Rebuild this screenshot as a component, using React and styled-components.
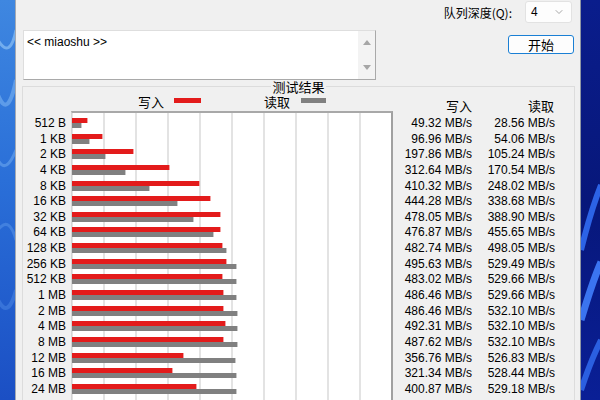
import React from "react";
import styled, { createGlobalStyle } from "styled-components";
import { ChevronDown } from "lucide-react";

const GlobalStyle = createGlobalStyle`
  html, body {
    margin: 0;
    padding: 0;
    overflow: hidden;
  }
  body {
    font-family: "Liberation Sans", "Noto Sans CJK SC", sans-serif;
    font-size: 12px;
    color: #000;
  }
`;

// last row only peeks in at the bottom edge, so it has no texts
const ROWS = [
  ["512 B", 49.32, 28.56],
  ["1 KB", 96.96, 54.06],
  ["2 KB", 197.86, 105.24],
  ["4 KB", 312.64, 170.54],
  ["8 KB", 410.32, 248.02],
  ["16 KB", 444.28, 338.68],
  ["32 KB", 478.05, 388.9],
  ["64 KB", 476.87, 455.65],
  ["128 KB", 482.74, 498.05],
  ["256 KB", 495.63, 529.49],
  ["512 KB", 483.02, 529.66],
  ["1 MB", 486.46, 529.66],
  ["2 MB", 486.46, 532.1],
  ["4 MB", 492.31, 532.1],
  ["8 MB", 487.62, 532.1],
  ["12 MB", 356.76, 526.83],
  ["16 MB", 321.34, 528.44],
  ["24 MB", 400.87, 529.18],
];
const BARS = [...ROWS, ["32 MB", 350.12, 529.4]];

const SCALE = 0.31;
const ROW_H = "15.65px";

const Screen = styled.div`
  width: 600px;
  height: 400px;
  overflow: hidden;
  display: flex;
`;

const Wall = styled.div`
  width: ${(p) => p.$w}px;
  flex: none;
  height: 400px;
  svg {
    display: block;
  }
`;

const Window = styled.div`
  flex: 1;
  background: #f0f0f0;
  border-left: 1px solid #a3a9b3;
  border-right: 1px solid #8e96a4;
  display: flex;
  flex-direction: column;
`;

const TopBar = styled.div`
  flex: none;
  height: 30px;
  display: flex;
  justify-content: flex-end;
  align-items: flex-start;
  padding-right: 8px;
  font-family: "Noto Sans CJK SC", "Liberation Sans", sans-serif;
`;

const QLabel = styled.span`
  font-size: 12px;
  line-height: 16px;
  margin-top: 5px;
  margin-right: 13px;
`;

const Select = styled.div`
  width: 47px;
  height: 22px;
  margin-top: 1px;
  box-sizing: border-box;
  background: #fdfdfd;
  border: 1px solid #e2e2e2;
  border-radius: 3px;
  display: flex;
  align-items: center;
  justify-content: space-between;
  padding: 0 6px 0 5px;
  font-size: 12px;
  font-family: "Liberation Sans", sans-serif;
`;

const InputRow = styled.div`
  flex: none;
  display: flex;
  align-items: flex-start;
`;

const Memo = styled.div`
  width: 353px;
  height: 50px;
  box-sizing: border-box;
  margin-left: 7px;
  background: #fff;
  border: 1px solid;
  border-color: #dedede #a9a9a9 #a9a9a9 #dedede;
  display: flex;
`;

const MemoText = styled.div`
  flex: 1;
  padding: 4px 0 0 3px;
  font-size: 12px;
  line-height: 14px;
`;

const ScrollCol = styled.div`
  width: 17px;
  background: #f3f3f3;
  display: flex;
  flex-direction: column;
  align-items: center;
  justify-content: space-between;
  padding: 9px 0 9px;
  box-sizing: border-box;
`;

const Arrow = styled.div`
  width: 0;
  height: 0;
  border-left: 4px solid transparent;
  border-right: 4px solid transparent;
  ${(p) =>
    p.$down
      ? "border-top: 5px solid #a6a6a6;"
      : "border-bottom: 5px solid #a6a6a6;"}
`;

const StartButton = styled.button`
  margin-left: auto;
  margin-right: 6px;
  margin-top: 5px;
  width: 66px;
  height: 19px;
  padding: 0;
  background: #fdfdfd;
  border: 1px solid #1a7fd4;
  border-radius: 3px;
  font-family: "Noto Sans CJK SC", sans-serif;
  font-size: 13px;
  line-height: 15px;
  color: #000;
`;

const Group = styled.fieldset`
  flex: none;
  margin: -1px 5px 0 6px;
  padding: 0;
  min-width: 0;
  border: 1px solid #dcdcdc;
  legend {
    margin: 0 auto;
    padding: 0 1px;
    font-family: "Noto Sans CJK SC", sans-serif;
    font-size: 13px;
    line-height: 15px;
  }
`;

const LegendRow = styled.div`
  height: 17px;
  display: flex;
  align-items: flex-start;
  font-family: "Noto Sans CJK SC", sans-serif;
  font-size: 13px;
  line-height: 15px;
`;

const KeyText = styled.span`
  margin-left: ${(p) => p.$ml}px;
`;

const Swatch = styled.span`
  width: ${(p) => p.$w}px;
  height: 5px;
  margin-top: 4px;
  margin-left: ${(p) => p.$ml}px;
  background: ${(p) => p.$c};
`;

const HeadGroup = styled.div`
  margin-left: auto;
  margin-top: 4px;
  padding-right: 19px;
  display: flex;
`;

const HeadCell = styled.span`
  width: ${(p) => p.$w}px;
  text-align: right;
  padding-right: ${(p) => p.$pr || 0}px;
  box-sizing: border-box;
`;

const Main = styled.div`
  display: flex;
  align-items: flex-start;
`;

const LabelCol = styled.div`
  width: 48px;
  padding: 5px 5px 0 0;
  box-sizing: border-box;
  text-align: right;
`;

const Cell = styled.div`
  height: ${ROW_H};
  line-height: ${ROW_H};
  white-space: nowrap;
`;

const Chart = styled.div`
  width: 322px;
  height: 300px;
  box-sizing: border-box;
  border-left: 1px solid #d4d4d4;
  border-top: 2px solid #a8a8a8;
  border-right: 2px solid #a0a0a0;
  padding-top: 4px;
  background-color: #fff;
  background-image: linear-gradient(to right, #e3e3e3 2px, transparent 2px);
  background-size: 32px 100%;
  background-position: 31px 0;
`;

const BarRow = styled.div`
  height: ${ROW_H};
  padding-top: 1px;
  box-sizing: border-box;
`;

const Bar = styled.div`
  height: 5px;
  background: ${(p) => p.$c};
  box-shadow: 1px 0 0 ${(p) => p.$edge};
`;

const ValuesCol = styled.div`
  padding: 5px 19px 0 0;
  display: flex;
  flex: 1;
  justify-content: flex-end;
`;

const ValCol = styled.div`
  width: ${(p) => p.$w}px;
  text-align: right;
`;

const fmt = (v) => `${v.toFixed(2)} MB/s`;

const LeftPaper = () => (
  <svg width="15" height="400" viewBox="0 0 15 400">
    <defs>
      <linearGradient id="lw" x1="0" y1="0" x2="0" y2="1">
        <stop offset="0" stopColor="#3f87e0" />
        <stop offset="0.45" stopColor="#2a6fd8" />
        <stop offset="1" stopColor="#1b4fc4" />
      </linearGradient>
    </defs>
    <rect width="15" height="400" fill="url(#lw)" />
    <path d="M-2 40 Q10 60 16 30" stroke="#8cc0f5" strokeWidth="3" fill="none" opacity="0.7" />
    <path d="M-2 95 Q8 120 16 80" stroke="#7ab3f2" strokeWidth="4" fill="none" opacity="0.6" />
    <path d="M-2 160 Q6 175 16 150" stroke="#6aa6ee" strokeWidth="3" fill="none" opacity="0.6" />
    <path d="M-2 230 Q9 215 16 240" stroke="#5b97ea" strokeWidth="3" fill="none" opacity="0.5" />
    <path d="M-2 300 Q8 320 16 290" stroke="#4d8ae6" strokeWidth="4" fill="none" opacity="0.5" />
  </svg>
);

const RightPaper = () => (
  <svg width="19" height="400" viewBox="0 0 19 400">
    <defs>
      <linearGradient id="rw" x1="0" y1="0" x2="0" y2="1">
        <stop offset="0" stopColor="#0a1d8c" />
        <stop offset="0.5" stopColor="#07177a" />
        <stop offset="1" stopColor="#0a1f96" />
      </linearGradient>
    </defs>
    <rect width="19" height="400" fill="url(#rw)" />
    <path d="M0 250 Q10 210 20 185" stroke="#2c63e6" strokeWidth="6" fill="none" />
    <path d="M0 320 Q12 280 20 262" stroke="#3b74f0" strokeWidth="7" fill="none" />
    <path d="M0 390 Q10 360 20 340" stroke="#2b5fe0" strokeWidth="6" fill="none" />
  </svg>
);

export default function App() {
  return (
    <Screen>
      <GlobalStyle />
      <Wall $w={15}>
        <LeftPaper />
      </Wall>
      <Window>
        <TopBar>
          <QLabel>队列深度(Q):</QLabel>
          <Select>
            <span>4</span>
            <ChevronDown size={12} color="#8a8a8a" strokeWidth={1.5} />
          </Select>
        </TopBar>
        <InputRow>
          <Memo>
            <MemoText>{"<< miaoshu >>"}</MemoText>
            <ScrollCol>
              <Arrow />
              <Arrow $down />
            </ScrollCol>
          </Memo>
          <StartButton>开始</StartButton>
        </InputRow>
        <Group>
          <legend>测试结果</legend>
          <LegendRow>
            <KeyText $ml={115}>写入</KeyText>
            <Swatch $w={27} $ml={10} $c="#e31b1b" />
            <KeyText $ml={63}>读取</KeyText>
            <Swatch $w={25} $ml={11} $c="#808080" />
            <HeadGroup>
              <HeadCell $w={79}>写入</HeadCell>
              <HeadCell $w={83} $pr={1}>读取</HeadCell>
            </HeadGroup>
          </LegendRow>
          <Main>
            <LabelCol>
              {ROWS.map(([label]) => (
                <Cell key={label}>{label}</Cell>
              ))}
            </LabelCol>
            <Chart>
              {BARS.map(([label, w, r]) => (
                <BarRow key={label}>
                  <Bar $c="#e31b1b" $edge="#f3a0a0" style={{ width: w * SCALE }} />
                  <Bar $c="#808080" $edge="#c8c8c8" style={{ width: r * SCALE }} />
                </BarRow>
              ))}
            </Chart>
            <ValuesCol>
              <ValCol $w={79}>
                {ROWS.map(([label, w]) => (
                  <Cell key={label}>{fmt(w)}</Cell>
                ))}
              </ValCol>
              <ValCol $w={83}>
                {ROWS.map(([label, , r]) => (
                  <Cell key={label}>{fmt(r)}</Cell>
                ))}
              </ValCol>
            </ValuesCol>
          </Main>
        </Group>
      </Window>
      <Wall $w={19}>
        <RightPaper />
      </Wall>
    </Screen>
  );
}
